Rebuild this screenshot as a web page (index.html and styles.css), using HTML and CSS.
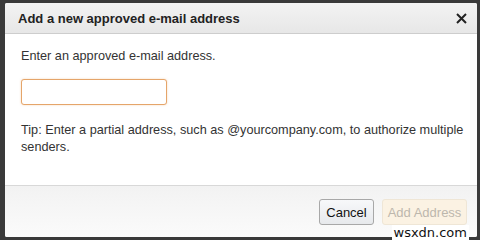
FILE: index.html
```html
<!DOCTYPE html>
<html>
<head>
<meta charset="utf-8">
<link rel="stylesheet" href="styles.css">
</head>
<body>
<div class="page">
  <div class="dialog">
    <div class="dlg-header">
      <span class="dlg-title">Add a new approved e-mail address</span>
      <svg class="dlg-close" width="11" height="11" viewBox="0 0 11 11"><path d="M1 1 L10 10 M10 1 L1 10" stroke="#222" stroke-width="2" fill="none"/></svg>
    </div>
    <div class="dlg-body">
      <p class="prompt">Enter an approved e-mail address.</p>
      <input class="email-input" type="text">
      <p class="tip">Tip: Enter a partial address, such as @yourcompany.com, to authorize multiple senders.</p>
    </div>
    <div class="dlg-footer">
      <button class="btn btn-cancel">Cancel</button>
      <button class="btn btn-add" disabled>Add Address</button>
    </div>
  </div>
  <div class="watermark">wsxdn.com</div>
</div>
</body>
</html>
```
FILE: styles.css
```css
html, body {
  margin: 0;
  padding: 0;
  background: #3a3a3a;
  font-family: "Liberation Sans", Arial, sans-serif;
}
.page {
  position: relative;
  width: 480px;
  height: 240px;
  overflow: hidden;
  padding: 3px 3px 0 5px;
  box-sizing: border-box;
}
.dialog {
  height: 234px;
  background: #fff;
  display: flex;
  flex-direction: column;
  border-radius: 2px;
}
.dlg-header {
  height: 31px;
  box-sizing: border-box;
  border-bottom: 1px solid #cdcdcd;
  background: linear-gradient(#f3f3f3, #e7e7e7);
  display: flex;
  align-items: center;
  justify-content: space-between;
  padding: 1px 10px 0 13px;
  flex: none;
  border-radius: 2px 2px 0 0;
}
.dlg-title {
  font-weight: bold;
  font-size: 13px;
  color: #222;
}
.dlg-close {
  display: block;
}
.dlg-body {
  flex: 1;
  padding: 14px 4px 0 16px;
  color: #333;
  font-size: 12.7px;
}
.prompt {
  margin: 0;
  line-height: 16px;
}
.email-input {
  display: block;
  margin: 15px 0 0 0;
  width: 146px;
  height: 26px;
  box-sizing: border-box;
  border: 1px solid #e5a56a;
  border-radius: 3px;
  box-shadow: 0 0 2px rgba(240, 170, 100, 0.5);
  outline: none;
  background: #fff;
}
.tip {
  margin: 17px 0 0 0;
  line-height: 17px;
}
.dlg-footer {
  height: 52px;
  box-sizing: border-box;
  border-top: 1px solid #d8d8d8;
  background: linear-gradient(#f2f2f2, #fbfbfb);
  flex: none;
  display: flex;
  justify-content: flex-end;
  align-items: center;
  gap: 8px;
  padding: 0 10px 0 0;
  border-radius: 0 0 2px 2px;
}
.btn {
  height: 26px;
  box-sizing: border-box;
  font-family: "Liberation Sans", Arial, sans-serif;
  font-size: 13px;
  border-radius: 3px;
  padding: 0;
  margin-top: 1px;
  white-space: nowrap;
}
.btn-cancel {
  width: 55px;
  color: #111;
  border: 1px solid #a8a8a8;
  background: linear-gradient(#f7f8fa, #e7e9ec);
}
.btn-add {
  width: 85px;
  color: #bdb7ad;
  border: 1px solid #efe6d6;
  background: #fbf2e3;
}
.watermark {
  position: absolute;
  right: 11px;
  bottom: 0;
  background: #fff;
  color: #111;
  font-family: "DejaVu Sans", sans-serif;
  font-size: 13px;
  line-height: 15px;
  padding: 0 2px;
}
```
